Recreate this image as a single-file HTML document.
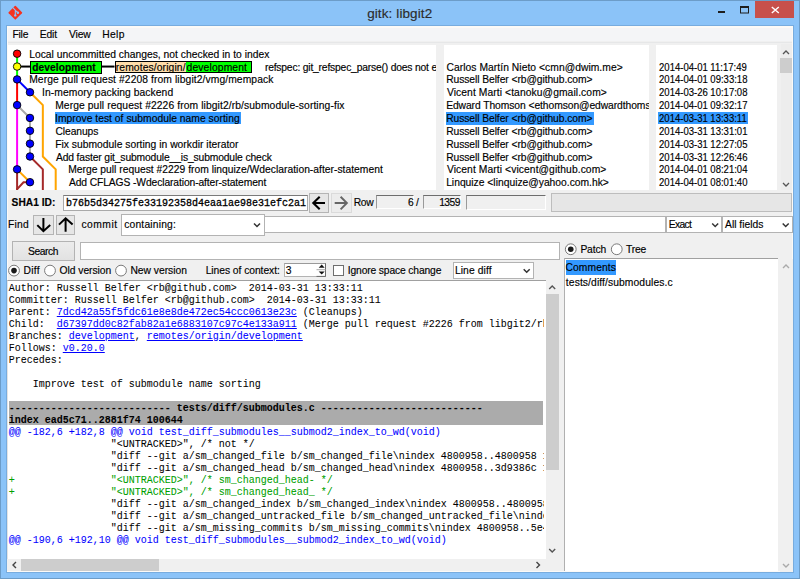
<!DOCTYPE html><html><head><meta charset="utf-8"><style>
*{margin:0;padding:0;box-sizing:border-box}
html,body{width:800px;height:579px;overflow:hidden;background:#8bc3f8;font-family:"Liberation Sans",sans-serif;color:#000}
.t{position:absolute;white-space:pre;line-height:1;-webkit-text-stroke:0.15px currentColor}
.b{position:absolute}
.m{font-family:"Liberation Mono",monospace;-webkit-text-stroke:0.05px currentColor}
.hh{color:#0000ff}.ha{color:#00a000}
.lk{color:#0000ff;text-decoration:underline}
svg{position:absolute;left:0;top:0}
</style></head><body>
<div class="b" style="left:0.00px;top:0.00px;width:800.00px;height:1.00px;background:#6c9cc8"></div>
<div class="b" style="left:0.00px;top:0.00px;width:1.00px;height:579.00px;background:#6c9cc8"></div>
<div class="b" style="left:799.00px;top:0.00px;width:1.00px;height:579.00px;background:#6c9cc8"></div>
<div class="b" style="left:0.00px;top:578.00px;width:800.00px;height:1.00px;background:#6c9cc8"></div>
<svg width="800" height="30" viewBox="0 0 800 30">
<g transform="translate(15.3,12.7) rotate(45)">
<rect x="-5.1" y="-5.1" width="10.2" height="10.2" rx="0.8" fill="#f5311f"/>
</g>
<path d="M12.9 7.6 L15.3 10.2 V15.2 M15.4 10.5 L17.9 12.7" stroke="#8bc3f8" stroke-width="1.1" fill="none"/>
<circle cx="15.3" cy="15.4" r="1.2" fill="#8bc3f8"/><circle cx="17.9" cy="12.7" r="1.2" fill="#8bc3f8"/>
<rect x="718" y="11" width="7" height="2" fill="#1e1e1e"/>
<rect x="740.5" y="6.5" width="8" height="6.5" fill="none" stroke="#1e1e1e" stroke-width="1"/>
<rect x="740" y="6" width="9" height="2" fill="#1e1e1e"/>
<rect x="755" y="1" width="39" height="17" fill="#c7504b"/>
<path d="M771.8 7 L778.8 13 M778.8 7 L771.8 13" stroke="#fff" stroke-width="1.4"/>
</svg>
<div class="t" style="left:367.15px;top:6.87px;font-size:13.5px;letter-spacing:0.104px;color:#2b2b2b;">gitk: libgit2</div>
<div class="b" style="left:6.00px;top:25.00px;width:788.00px;height:548.00px;background:#78acde"></div>
<div class="b" style="left:7.00px;top:26.40px;width:786.00px;height:545.60px;background:#fcfaf7"></div>
<div class="b" style="left:8.00px;top:27.80px;width:784.00px;height:543.20px;background:#f0f0f0"></div>
<div class="b" style="left:8.00px;top:27.80px;width:784.00px;height:13.70px;background:#f4f5f7"></div>
<div class="b" style="left:8.00px;top:41.50px;width:784.00px;height:1.00px;background:#e6e7e8"></div>
<div class="t" style="left:12.40px;top:30.28px;font-size:10.3px;letter-spacing:-0.183px;">File</div>
<div class="t" style="left:39.75px;top:30.28px;font-size:10.3px;letter-spacing:-0.150px;">Edit</div>
<div class="t" style="left:68.95px;top:30.28px;font-size:10.3px;letter-spacing:-0.133px;">View</div>
<div class="t" style="left:102.15px;top:30.28px;font-size:10.3px;letter-spacing:0.367px;">Help</div>
<div class="b" style="left:8.00px;top:45.00px;width:428.20px;height:145.00px;background:#fff"></div>
<div class="b" style="left:444.00px;top:45.00px;width:205.00px;height:145.00px;background:#fff"></div>
<div class="b" style="left:656.00px;top:45.00px;width:120.80px;height:145.00px;background:#fff"></div>
<div class="b" style="left:780.50px;top:44.00px;width:11.50px;height:146.00px;background:#ededed"></div>
<div class="b" style="left:780.00px;top:58.30px;width:12.00px;height:15.00px;background:#cdcdcd"></div>
<div class="b" style="left:54.70px;top:112.20px;width:185.90px;height:12.30px;background:#3399ff"></div>
<div class="b" style="left:446.00px;top:112.20px;width:148.30px;height:12.50px;background:#3399ff"></div>
<div class="b" style="left:658.00px;top:112.40px;width:90.00px;height:12.10px;background:#3399ff"></div>
<svg width="800" height="579" viewBox="0 0 800 579" style="clip-path:inset(45px 363px 389px 8px)">
<polyline points="17.10,53.70 17.10,79.40" fill="none" stroke="#00ff00" stroke-width="2" stroke-linejoin="miter"/>
<polyline points="17.10,79.40 17.10,105.10" fill="none" stroke="#ff0000" stroke-width="2" stroke-linejoin="miter"/>
<polyline points="17.10,79.40 29.97,92.25" fill="none" stroke="#0000ff" stroke-width="2" stroke-linejoin="miter"/>
<polyline points="29.97,92.25 42.84,105.10 42.84,156.50 55.71,169.35 55.71,200.00" fill="none" stroke="#ffa500" stroke-width="2" stroke-linejoin="miter"/>
<polyline points="17.10,105.10 17.10,169.35" fill="none" stroke="#ff00ff" stroke-width="2" stroke-linejoin="miter"/>
<polyline points="17.10,105.10 29.97,117.95 29.97,156.50" fill="none" stroke="#a9a9a9" stroke-width="2" stroke-linejoin="miter"/>
<polyline points="29.97,156.50 42.84,169.35 42.84,200.00" fill="none" stroke="#a52a2a" stroke-width="2" stroke-linejoin="miter"/>
<polyline points="17.10,169.35 29.97,182.20" fill="none" stroke="#ffa500" stroke-width="2" stroke-linejoin="miter"/>
<polyline points="17.10,169.35 17.10,200.00" fill="none" stroke="#a52a2a" stroke-width="2" stroke-linejoin="miter"/>
<polyline points="29.97,182.20 23.50,182.20 16.60,189.70" fill="none" stroke="#a52a2a" stroke-width="2" stroke-linejoin="miter"/>
<polyline points="17.10,66.55 30.00,66.55" fill="none" stroke="#000" stroke-width="2" stroke-linejoin="miter"/>
<polyline points="101.70,66.55 114.50,66.55" fill="none" stroke="#000" stroke-width="2" stroke-linejoin="miter"/>
<circle cx="17.10" cy="53.70" r="3.75" fill="#ff0000" stroke="#000" stroke-width="0.9"/>
<circle cx="17.10" cy="66.55" r="3.75" fill="#ffff00" stroke="#000" stroke-width="0.9"/>
<circle cx="17.10" cy="79.40" r="3.75" fill="#0000ff" stroke="#000" stroke-width="0.9"/>
<circle cx="29.97" cy="92.25" r="3.75" fill="#0000ff" stroke="#000" stroke-width="0.9"/>
<circle cx="17.10" cy="105.10" r="3.75" fill="#0000ff" stroke="#000" stroke-width="0.9"/>
<circle cx="29.97" cy="117.95" r="3.75" fill="#0000ff" stroke="#000" stroke-width="0.9"/>
<circle cx="29.97" cy="130.80" r="3.75" fill="#0000ff" stroke="#000" stroke-width="0.9"/>
<circle cx="29.97" cy="143.65" r="3.75" fill="#0000ff" stroke="#000" stroke-width="0.9"/>
<circle cx="29.97" cy="156.50" r="3.75" fill="#0000ff" stroke="#000" stroke-width="0.9"/>
<circle cx="17.10" cy="169.35" r="3.75" fill="#0000ff" stroke="#000" stroke-width="0.9"/>
<circle cx="29.97" cy="182.20" r="3.75" fill="#0000ff" stroke="#000" stroke-width="0.9"/>
</svg>
<div class="b" style="left:30.20px;top:61.00px;width:71.50px;height:12.70px;background:#00ff00;border:1px solid #000"></div>
<div class="t" style="left:32.30px;top:62.72px;font-size:10.2px;font-weight:bold;letter-spacing:0.060px;">development</div>
<div class="b" style="left:114.50px;top:61.20px;width:137.90px;height:12.30px;background:#00ff00;border:1px solid #000"></div>
<div class="b" style="left:115.50px;top:62.20px;width:70.50px;height:10.30px;background:#ffddaa"></div>
<div class="b" style="left:8px;top:45px;width:428.2px;height:145px;overflow:hidden">
<div class="t" style="left:107.80px;top:17.63px;font-size:10.3px;letter-spacing:0.114px;">remotes/origin/</div>
<div class="t" style="left:178.55px;top:17.63px;font-size:10.3px;letter-spacing:0.145px;">development</div>
<div class="t" style="left:256.90px;top:17.63px;font-size:10.3px;letter-spacing:-0.182px;">refspec: git_refspec_parse() does not exist</div>
<div class="t" style="left:21.15px;top:4.78px;font-size:10.3px;letter-spacing:0.020px;">Local uncommitted changes, not checked in to index</div>
<div class="t" style="left:21.15px;top:30.48px;font-size:10.3px;letter-spacing:0.092px;">Merge pull request #2208 from libgit2/vmg/mempack</div>
<div class="t" style="left:34.05px;top:43.33px;font-size:10.3px;letter-spacing:0.073px;">In-memory packing backend</div>
<div class="t" style="left:47.15px;top:56.18px;font-size:10.3px;letter-spacing:0.098px;">Merge pull request #2226 from libgit2/rb/submodule-sorting-fix</div>
<div class="t" style="left:47.05px;top:69.03px;font-size:10.3px;letter-spacing:0.023px;">Improve test of submodule name sorting</div>
<div class="t" style="left:47.50px;top:81.88px;font-size:10.3px;letter-spacing:-0.093px;">Cleanups</div>
<div class="t" style="left:47.15px;top:94.73px;font-size:10.3px;letter-spacing:0.021px;">Fix submodule sorting in workdir iterator</div>
<div class="t" style="left:47.95px;top:107.58px;font-size:10.3px;letter-spacing:-0.131px;">Add faster git_submodule__is_submodule check</div>
<div class="t" style="left:60.15px;top:120.43px;font-size:10.3px;letter-spacing:0.015px;">Merge pull request #2229 from linquize/Wdeclaration-after-statement</div>
<div class="t" style="left:60.95px;top:133.28px;font-size:10.3px;letter-spacing:-0.106px;">Add CFLAGS -Wdeclaration-after-statement</div>
</div>
<div class="b" style="left:444px;top:45px;width:205px;height:145px;overflow:hidden">
<div class="t" style="left:2.50px;top:17.63px;font-size:10.3px;letter-spacing:0.047px;">Carlos Martín Nieto &lt;cmn@dwim.me&gt;</div>
<div class="t" style="left:2.15px;top:30.48px;font-size:10.3px;letter-spacing:-0.071px;">Russell Belfer &lt;rb@github.com&gt;</div>
<div class="t" style="left:2.95px;top:43.33px;font-size:10.3px;letter-spacing:0.085px;">Vicent Marti &lt;tanoku@gmail.com&gt;</div>
<div class="t" style="left:2.15px;top:56.18px;font-size:10.3px;letter-spacing:-0.071px;">Edward Thomson &lt;ethomson@edwardthomson.com&gt;</div>
<div class="t" style="left:2.15px;top:69.03px;font-size:10.3px;letter-spacing:-0.071px;">Russell Belfer &lt;rb@github.com&gt;</div>
<div class="t" style="left:2.15px;top:81.88px;font-size:10.3px;letter-spacing:-0.071px;">Russell Belfer &lt;rb@github.com&gt;</div>
<div class="t" style="left:2.15px;top:94.73px;font-size:10.3px;letter-spacing:-0.071px;">Russell Belfer &lt;rb@github.com&gt;</div>
<div class="t" style="left:2.15px;top:107.58px;font-size:10.3px;letter-spacing:-0.071px;">Russell Belfer &lt;rb@github.com&gt;</div>
<div class="t" style="left:2.95px;top:120.43px;font-size:10.3px;letter-spacing:0.085px;">Vicent Marti &lt;vicent@github.com&gt;</div>
<div class="t" style="left:2.15px;top:133.28px;font-size:10.3px;letter-spacing:-0.000px;">Linquize &lt;linquize@yahoo.com.hk&gt;</div>
</div>
<div class="t" style="left:658.50px;top:62.63px;font-size:10.3px;transform:scaleX(0.9244);transform-origin:0.50px 0">2014-04-01 11:17:49</div>
<div class="t" style="left:658.50px;top:75.48px;font-size:10.3px;transform:scaleX(0.9244);transform-origin:0.50px 0">2014-04-01 09:33:18</div>
<div class="t" style="left:658.50px;top:88.33px;font-size:10.3px;transform:scaleX(0.9244);transform-origin:0.50px 0">2014-03-26 10:17:08</div>
<div class="t" style="left:658.50px;top:101.18px;font-size:10.3px;transform:scaleX(0.9244);transform-origin:0.50px 0">2014-04-01 09:32:17</div>
<div class="t" style="left:658.50px;top:114.03px;font-size:10.3px;transform:scaleX(0.9244);transform-origin:0.50px 0">2014-03-31 13:33:11</div>
<div class="t" style="left:658.50px;top:126.88px;font-size:10.3px;transform:scaleX(0.9244);transform-origin:0.50px 0">2014-03-31 13:31:01</div>
<div class="t" style="left:658.50px;top:139.73px;font-size:10.3px;transform:scaleX(0.9244);transform-origin:0.50px 0">2014-03-31 12:27:05</div>
<div class="t" style="left:658.50px;top:152.58px;font-size:10.3px;transform:scaleX(0.9244);transform-origin:0.50px 0">2014-03-31 12:26:46</div>
<div class="t" style="left:658.50px;top:165.43px;font-size:10.3px;transform:scaleX(0.9244);transform-origin:0.50px 0">2014-04-01 08:21:04</div>
<div class="t" style="left:658.50px;top:178.28px;font-size:10.3px;transform:scaleX(0.9244);transform-origin:0.50px 0">2014-04-01 08:01:40</div>
<div class="t" style="left:11.60px;top:197.67px;font-size:10.2px;font-weight:bold;letter-spacing:0.021px;">SHA1 ID:</div>
<div class="b" style="left:63.25px;top:194.50px;width:244.75px;height:16.30px;background:#fff;border:1px solid #a9a9a9;border-top-color:#7a7a7a"></div>
<div class="t m" style="left:66px;top:198.53px;font-size:10px;color:#000;-webkit-text-stroke:0.3px #000">b76b5d34275fe33192358d4eaa1ae98e31efc2a1</div>
<div class="b" style="left:309.25px;top:192.50px;width:19.75px;height:20.00px;background:#e6e6e6;border:1px solid #b4b4b4"></div>
<div class="b" style="left:331.25px;top:192.50px;width:20.25px;height:20.00px;background:#ececec;border:1px solid #dadada"></div>
<div class="t" style="left:353.65px;top:197.58px;font-size:10.3px;letter-spacing:-0.325px;">Row</div>
<div class="b" style="left:376.00px;top:194.50px;width:37.70px;height:14.50px;background:#f0f0f0;border:1px solid;border-color:#6e6e6e #fff #fff #9a9a9a"></div>
<div class="t" style="left:408.00px;top:197.58px;font-size:10.3px;">6</div>
<div class="t" style="left:415.90px;top:197.58px;font-size:10.3px;">/</div>
<div class="b" style="left:422.80px;top:194.50px;width:38.60px;height:14.50px;background:#f0f0f0;border:1px solid;border-color:#6e6e6e #fff #fff #9a9a9a"></div>
<div class="t" style="left:439.20px;top:197.58px;font-size:10.3px;letter-spacing:-0.550px;">1359</div>
<div class="b" style="left:466.30px;top:194.50px;width:79.70px;height:15.50px;background:#f0f0f0;border:1px solid;border-color:#6e6e6e #fff #fff #9a9a9a"></div>
<div class="b" style="left:551.00px;top:193.00px;width:240.50px;height:18.70px;background:#e6e6e6;border:1px solid #bdbdbd"></div>
<div class="t" style="left:7.95px;top:219.88px;font-size:10.3px;letter-spacing:0.233px;">Find</div>
<div class="b" style="left:33.40px;top:215.00px;width:20.30px;height:19.70px;background:#e6e6e6;border:1px solid #b4b4b4"></div>
<div class="b" style="left:56.00px;top:215.00px;width:19.40px;height:19.70px;background:#e6e6e6;border:1px solid #b4b4b4"></div>
<div class="t" style="left:81.45px;top:219.88px;font-size:10.3px;letter-spacing:0.480px;">commit</div>
<div class="b" style="left:121.25px;top:214.30px;width:143.35px;height:21.30px;background:#fff;border:1px solid #b3b3b3"></div>
<div class="t" style="left:124.15px;top:219.88px;font-size:10.3px;letter-spacing:0.195px;">containing:</div>
<div class="b" style="left:264.40px;top:215.80px;width:402.10px;height:17.60px;background:#fff;border:1px solid #b3b3b3"></div>
<div class="b" style="left:666.20px;top:215.90px;width:55.80px;height:17.00px;background:#fff;border:1px solid #b3b3b3"></div>
<div class="t" style="left:668.75px;top:219.88px;font-size:10.3px;letter-spacing:-0.638px;">Exact</div>
<div class="b" style="left:721.50px;top:215.90px;width:71.10px;height:17.00px;background:#fff;border:1px solid #b3b3b3"></div>
<div class="t" style="left:725.05px;top:219.88px;font-size:10.3px;letter-spacing:-0.006px;">All fields</div>
<div class="b" style="left:12.20px;top:241.25px;width:62.80px;height:19.35px;background:linear-gradient(#ececec,#e2e2e2);border:1px solid #b3b3b3"></div>
<div class="t" style="left:28.05px;top:246.63px;font-size:10.3px;letter-spacing:-0.460px;">Search</div>
<div class="b" style="left:80.25px;top:242.40px;width:479.25px;height:17.60px;background:#fff;border:1px solid #b3b3b3"></div>
<div class="t" style="left:23.55px;top:265.63px;font-size:10.3px;letter-spacing:0.283px;">Diff</div>
<div class="t" style="left:59.50px;top:265.63px;font-size:10.3px;letter-spacing:-0.030px;">Old version</div>
<div class="t" style="left:130.40px;top:265.63px;font-size:10.3px;letter-spacing:-0.015px;">New version</div>
<div class="t" style="left:205.65px;top:265.63px;font-size:10.3px;letter-spacing:-0.047px;">Lines of context:</div>
<div class="b" style="left:284.00px;top:262.50px;width:42.00px;height:14.40px;background:#fff;border:1px solid #b3b3b3;border-top-color:#9a9a9a;border-right-color:#6a6a6a"></div>
<div class="t" style="left:285.85px;top:265.63px;font-size:10.3px;">3</div>
<div class="b" style="left:332.80px;top:265.20px;width:11.00px;height:10.70px;background:#fff;border:1px solid #6e6e6e"></div>
<div class="t" style="left:347.80px;top:265.63px;font-size:10.3px;letter-spacing:-0.142px;">Ignore space change</div>
<div class="b" style="left:453.20px;top:261.75px;width:80.50px;height:17.55px;background:#fff;border:1px solid #b3b3b3"></div>
<div class="t" style="left:454.90px;top:265.63px;font-size:10.3px;letter-spacing:0.106px;">Line diff</div>
<div class="t" style="left:580.40px;top:245.38px;font-size:10.3px;letter-spacing:-0.137px;">Patch</div>
<div class="t" style="left:626.00px;top:245.38px;font-size:10.3px;letter-spacing:-0.200px;">Tree</div>
<div class="b" style="left:7.00px;top:280.00px;width:539.00px;height:278.50px;background:#fff;border-top:1px solid #a0a0a0;border-left:1px solid #e3e3e3"></div>
<div class="b" style="left:546.00px;top:280.00px;width:17.50px;height:291.00px;background:#f0f0f0"></div>
<div class="b" style="left:546.00px;top:294.00px;width:13.00px;height:176.00px;background:#cdcdcd"></div>
<div class="b" style="left:7.00px;top:558.50px;width:539.00px;height:12.50px;background:#f0f0f0"></div>
<div class="b" style="left:21.00px;top:559.00px;width:138.00px;height:12.00px;background:#cdcdcd"></div>
<div class="b" style="left:563.80px;top:258.20px;width:1.20px;height:313.30px;background:#b0b0b0"></div>
<div class="b" style="left:565.00px;top:258.20px;width:213.00px;height:313.30px;background:#fff;border-top:1px solid #a0a0a0"></div>
<div class="b" style="left:779.50px;top:259.00px;width:13.50px;height:312.50px;background:#f0f0f0"></div>
<div class="b" style="left:565.70px;top:260.00px;width:50.20px;height:14.50px;background:#3399ff"></div>
<div class="t" style="left:565.50px;top:262.58px;font-size:10.3px;letter-spacing:0.079px;">Comments</div>
<div class="t" style="left:565.85px;top:277.58px;font-size:10.3px;letter-spacing:0.100px;">tests/diff/submodules.c</div>
<div class="b" style="left:8px;top:281px;width:535.7px;height:277.5px;overflow:hidden;background:#fff">
<div class="b" style="left:1px;top:120px;width:534px;height:23.8px;background:#ababab"></div>
<div class="m" style="position:absolute;left:0.75px;top:1.63px;font-size:10px;line-height:12px;white-space:pre;color:#000">Author: Russell Belfer &lt;rb@github.com&gt;  2014-03-31 13:33:11
Committer: Russell Belfer &lt;rb@github.com&gt;  2014-03-31 13:33:11
Parent: <span class="lk">7dcd42a55f5fdc61e8e8de472ec54ccc0613e23c</span> (Cleanups)
Child:  <span class="lk">d67397dd0c82fab82a1e6883107c97c4e133a911</span> (Merge pull request #2226 from libgit2/rb/submodule-sorting-fix)
Branches: <span class="lk">development</span>, <span class="lk">remotes/origin/development</span>
Follows: <span class="lk">v0.20.0</span>
Precedes: 

    Improve test of submodule name sorting

<b>--------------------------- tests/diff/submodules.c ---------------------------</b>
<b>index ead5c71..2881f74 100644</b>
<span class="hh">@@ -182,6 +182,8 @@ void test_diff_submodules__submod2_index_to_wd(void)</span>
                 &quot;&lt;UNTRACKED&gt;&quot;, /* not */
                 &quot;diff --git a/sm_changed_file b/sm_changed_file\nindex 4800958..4800958 160000\n--- a/sm_changed_file
                 &quot;diff --git a/sm_changed_head b/sm_changed_head\nindex 4800958..3d9386c 160000\n--- a/sm_changed_head
<span class="ha">+                &quot;&lt;UNTRACKED&gt;&quot;, /* sm_changed_head- */</span>
<span class="ha">+                &quot;&lt;UNTRACKED&gt;&quot;, /* sm_changed_head_ */</span>
                 &quot;diff --git a/sm_changed_index b/sm_changed_index\nindex 4800958..4800958 160000\n--- a/sm_changed_index
                 &quot;diff --git a/sm_changed_untracked_file b/sm_changed_untracked_file\nindex 4800958..4800958 160000
                 &quot;diff --git a/sm_missing_commits b/sm_missing_commits\nindex 4800958..5e4963595a9774b90524d35a807169049de8ccad
<span class="hh">@@ -190,6 +192,10 @@ void test_diff_submodules__submod2_index_to_wd(void)</span></div>
</div>
<svg width="800" height="579" viewBox="0 0 800 579">
<path d="M783 54 L786 51 L789 54" stroke="#555" stroke-width="1.3" fill="none"/>
<path d="M783 183 L786 186 L789 183" stroke="#555" stroke-width="1.3" fill="none"/>
</svg>
<svg width="800" height="579" viewBox="0 0 800 579">
<path d="M313.5 203 H325 M319.7 196.8 L313.3 203 L319.7 209.3" stroke="#000" stroke-width="2.1" fill="none"/>
<path d="M334.7 203 H346.5 M340.6 196.8 L346.9 203 L340.6 209.3" stroke="#666" stroke-width="1.9" fill="none"/>
<path d="M43.4 218 V230.5 M37.3 225.1 L43.4 231.2 L50.2 225.1" stroke="#000" stroke-width="2" fill="none"/>
<path d="M65.6 231.7 V219 M59 224.6 L65.6 218.3 L72.6 224.6" stroke="#000" stroke-width="2" fill="none"/>
<path d="M254 223.5 L257 226.5 L260 223.5" stroke="#333" stroke-width="1.5" fill="none"/>
<path d="M712.2 223.5 L715.2 226.5 L718.2 223.5" stroke="#333" stroke-width="1.5" fill="none"/>
<path d="M782.7 223.5 L785.7 226.5 L788.7 223.5" stroke="#333" stroke-width="1.5" fill="none"/>
<path d="M523.7 269.2 L526.7 272.2 L529.7 269.2" stroke="#333" stroke-width="1.5" fill="none"/>
<circle cx="14" cy="270.6" r="5.4" fill="#fff" stroke="#7a7a7a" stroke-width="1"/>
<circle cx="14" cy="270.6" r="2.8" fill="#1a1a1a"/>
<circle cx="50" cy="270.6" r="5.4" fill="#fff" stroke="#7a7a7a" stroke-width="1"/>
<circle cx="121" cy="270.6" r="5.4" fill="#fff" stroke="#7a7a7a" stroke-width="1"/>
<circle cx="570.75" cy="249.25" r="5.4" fill="#fff" stroke="#7a7a7a" stroke-width="1"/>
<circle cx="570.75" cy="249.25" r="2.8" fill="#1a1a1a"/>
<circle cx="616.75" cy="249.25" r="5.4" fill="#fff" stroke="#7a7a7a" stroke-width="1"/>
<path d="M318.7 267.8 L321.7 264.6 L324.7 267.8 Z" fill="#111"/>
<path d="M318.7 271.4 L321.7 274.6 L324.7 271.4 Z" fill="#111"/>
<rect x="316.5" y="269.2" width="9" height="1" fill="#a8a8a8"/><rect x="316.5" y="275.9" width="9" height="1" fill="#6a6a6a"/>
</svg>
<svg width="800" height="579" viewBox="0 0 800 579">
<path d="M549.2 289 L552.2 286 L555.2 289" stroke="#555" stroke-width="1.4" fill="none"/>
<path d="M549.2 549 L552.2 552 L555.2 549" stroke="#555" stroke-width="1.4" fill="none"/>
<path d="M16 562 L13 565 L16 568" stroke="#444" stroke-width="1.4" fill="none"/>
<path d="M536.5 562 L539.5 565 L536.5 568" stroke="#444" stroke-width="1.4" fill="none"/>
<path d="M783 268 L786 265 L789 268" stroke="#aaa" stroke-width="1.4" fill="none"/>
<path d="M783 564 L786 567 L789 564" stroke="#aaa" stroke-width="1.4" fill="none"/>
</svg>
</body></html>
